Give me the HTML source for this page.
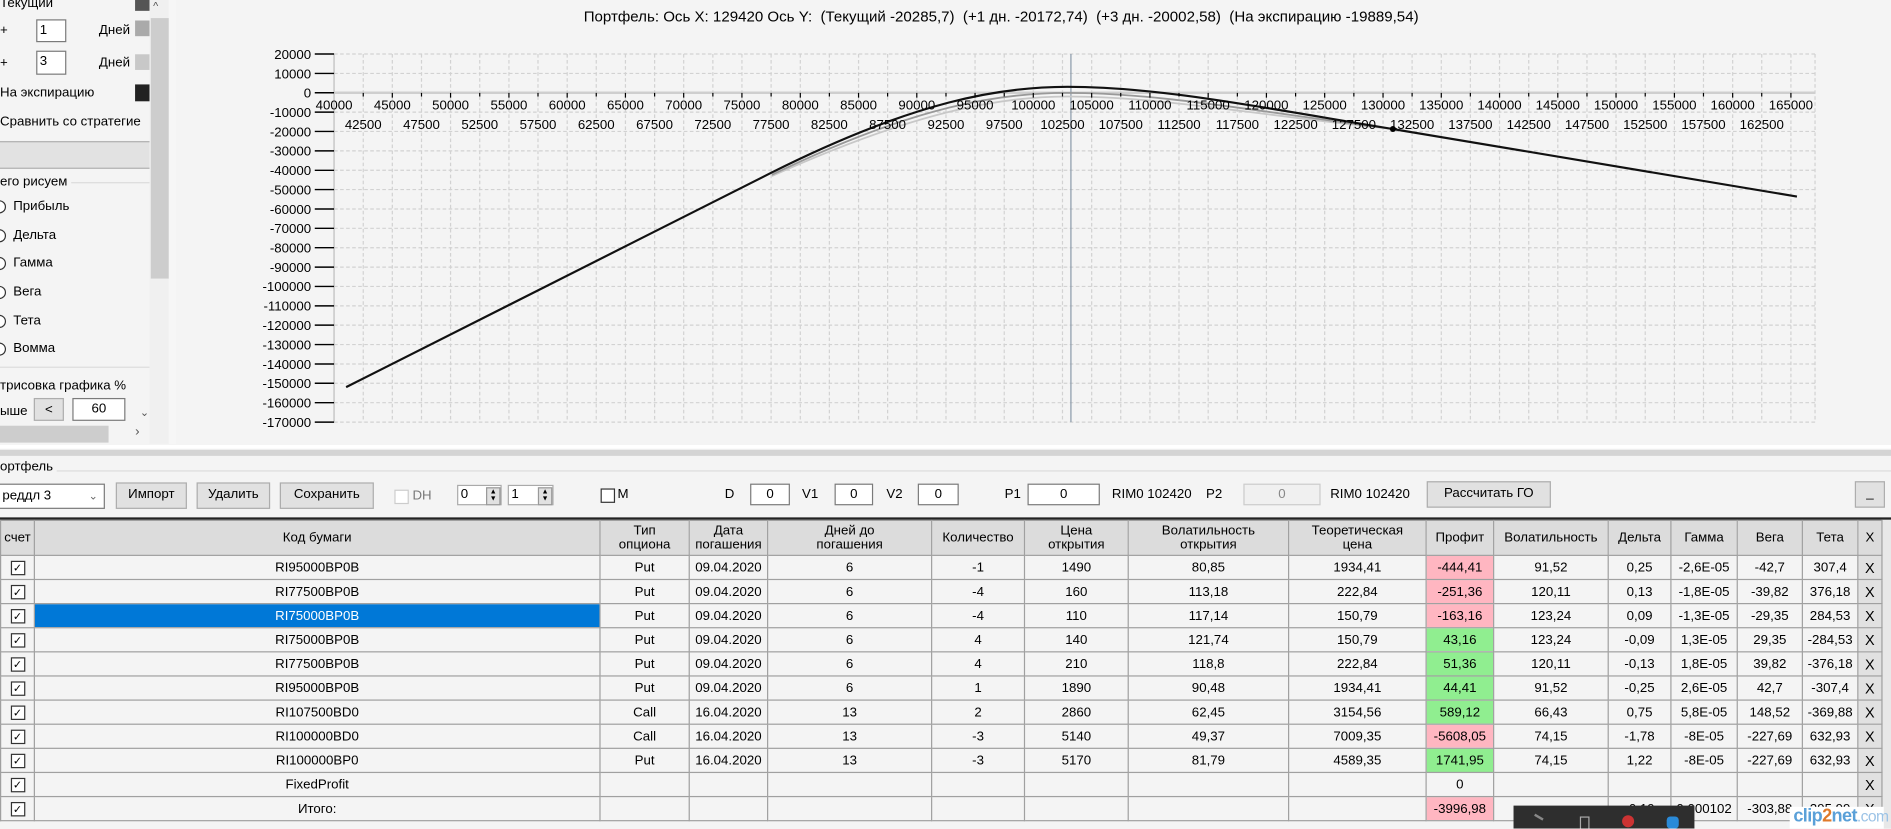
<!DOCTYPE html>
<html><head><meta charset="utf-8">
<style>
html,body{margin:0;padding:0;width:1891px;height:829px;overflow:hidden;background:#f4f4f4;}
#s{position:absolute;left:0;top:0;width:1568px;height:687px;transform:scale(1.206);transform-origin:0 0;font-family:"Liberation Sans",Arial,sans-serif;font-size:11px;color:#000;background:#f4f4f4;overflow:hidden;}
.a{position:absolute;white-space:nowrap;}
.box{position:absolute;background:#fff;border:1px solid #7a7a7a;box-sizing:border-box;}
.btn{position:absolute;background:#e1e1e1;border:1px solid #adadad;box-sizing:border-box;text-align:center;line-height:19px;}
.rad{position:absolute;width:11px;height:11px;border:1px solid #333;border-radius:50%;box-sizing:border-box;background:#fff;}
table{position:absolute;left:0;top:431px;border-collapse:collapse;table-layout:fixed;width:1560px;}
td,th{border:1px solid #a0a0a0;padding:0;text-align:center;font-weight:normal;overflow:hidden;white-space:nowrap;font-size:11px;}
th{background:#dcdcdc;height:28px;line-height:12px;}
td{height:19px;line-height:18px;background:#f4f4f4;}
.cb{display:inline-block;width:10px;height:10px;border:1px solid #333;background:#fff;font-size:9px;line-height:10px;vertical-align:middle;}
.r{background:#ffb6c1;} .g{background:#90ee90;}
td.x{background:#e1e1e1;border:1px solid #a0a0a0;font-size:12px;}
.sel{background:#0078d7;color:#fff;}
</style></head><body><div id="s">

<!-- left panel -->
<div class="a" style="left:0;top:-3px;">Текущий</div>
<div class="a" style="left:112px;top:0;width:12px;height:9px;background:#555;"></div>
<div class="a" style="left:0;top:19px;">+</div>
<div class="box" style="left:30px;top:16px;width:25px;height:19px;padding-left:2px;line-height:17px;">1</div>
<div class="a" style="left:82px;top:19px;">Дней</div>
<div class="a" style="left:112px;top:17px;width:12px;height:13px;background:#aaa;"></div>
<div class="a" style="left:0;top:46px;">+</div>
<div class="box" style="left:30px;top:42px;width:25px;height:20px;padding-left:2px;line-height:17px;">3</div>
<div class="a" style="left:82px;top:46px;">Дней</div>
<div class="a" style="left:112px;top:45px;width:12px;height:13px;background:#c8c8c8;"></div>
<div class="a" style="left:0;top:71px;">На экспирацию</div>
<div class="a" style="left:112px;top:70px;width:12px;height:14px;background:#222;"></div>
<div class="a" style="left:0;top:95px;">Сравнить со стратегие</div>
<div class="a" style="left:0;top:117px;width:124px;height:21px;background:#e2e2e2;border-top:1px solid #b0b0b0;border-bottom:1px solid #b0b0b0;"></div>
<div class="a" style="left:0;top:151px;width:124px;height:1px;background:#dcdcdc;"></div>
<div class="a" style="left:0;top:145px;background:#f4f4f4;padding-right:3px;">его рисуем</div>
<div class="rad" style="left:-6px;top:166px;"></div><div class="a" style="left:-4px;top:169px;width:4px;height:4px;background:#333;border-radius:50%;"></div>
<div class="a" style="left:11px;top:165px;">Прибыль</div>
<div class="rad" style="left:-6px;top:190px;"></div><div class="a" style="left:11px;top:189px;">Дельта</div>
<div class="rad" style="left:-6px;top:213px;"></div><div class="a" style="left:11px;top:212px;">Гамма</div>
<div class="rad" style="left:-6px;top:237px;"></div><div class="a" style="left:11px;top:236px;">Вега</div>
<div class="rad" style="left:-6px;top:261px;"></div><div class="a" style="left:11px;top:260px;">Тета</div>
<div class="rad" style="left:-6px;top:284px;"></div><div class="a" style="left:11px;top:283px;">Вомма</div>
<div class="a" style="left:0;top:304px;width:124px;height:1px;background:#dcdcdc;"></div>
<div class="a" style="left:0;top:314px;">трисовка графика %</div>
<div class="a" style="left:0;top:335px;">ыше</div>
<div class="btn" style="left:28px;top:330px;width:25px;height:19px;">&lt;</div>
<div class="box" style="left:60px;top:330px;width:44px;height:19px;text-align:center;line-height:17px;">60</div>
<div class="a" style="left:116px;top:337px;font-size:9px;color:#555;">&#8964;</div>
<div class="a" style="left:0;top:353px;width:90px;height:14px;background:#cdcdcd;"></div>
<div class="a" style="left:112px;top:352px;font-size:11px;color:#555;">›</div>
<div class="a" style="left:124px;top:0;width:16px;height:368px;background:#f0f0f0;"></div>
<div class="a" style="left:125px;top:15px;width:15px;height:216px;background:#cdcdcd;"></div>
<div class="a" style="left:127px;top:0;font-size:9px;color:#555;">^</div>
<div class="a" style="left:140px;top:0;width:6px;height:368px;background:#f6f6f6;"></div>

<!-- chart -->
<div class="a" style="left:484px;top:7px;font-size:12.5px;">Портфель: Ось X: 129420 Ось Y:&nbsp; (Текущий -20285,7)&nbsp; (+1 дн. -20172,74)&nbsp; (+3 дн. -20002,58)&nbsp; (На экспирацию -19889,54)</div>
<svg class="a" style="left:0;top:0" width="1568" height="370" viewBox="0 0 1568 370" font-family="Liberation Sans, Arial, sans-serif" font-size="11">
<g stroke="#d2d2d2" stroke-dasharray="3,2" stroke-width="1">
<path d="M277,44.8H1505M277,60.9H1505M277,93H1505M277,109H1505M277,125.1H1505M277,141.2H1505M277,157.2H1505M277,173.3H1505M277,189.3H1505M277,205.4H1505M277,221.5H1505M277,237.5H1505M277,253.6H1505M277,269.6H1505M277,285.7H1505M277,301.8H1505M277,317.8H1505M277,333.9H1505M277,350H1505"/>
<path d="M301.2,44.8V350M325.3,44.8V350M349.5,44.8V350M373.6,44.8V350M397.8,44.8V350M422,44.8V350M446.1,44.8V350M470.3,44.8V350M494.4,44.8V350M518.6,44.8V350M542.8,44.8V350M566.9,44.8V350M591.1,44.8V350M615.2,44.8V350M639.4,44.8V350M663.6,44.8V350M687.7,44.8V350M711.9,44.8V350M736,44.8V350M760.2,44.8V350M784.4,44.8V350M808.5,44.8V350M832.7,44.8V350M856.8,44.8V350M881,44.8V350M905.2,44.8V350M929.3,44.8V350M953.5,44.8V350M977.6,44.8V350M1001.8,44.8V350M1026,44.8V350M1050.1,44.8V350M1074.3,44.8V350M1098.4,44.8V350M1122.6,44.8V350M1146.8,44.8V350M1170.9,44.8V350M1195.1,44.8V350M1219.2,44.8V350M1243.4,44.8V350M1267.6,44.8V350M1291.7,44.8V350M1315.9,44.8V350M1340,44.8V350M1364.2,44.8V350M1388.4,44.8V350M1412.5,44.8V350M1436.7,44.8V350M1460.8,44.8V350M1485,44.8V350M1505,44.8V350"/>
</g>
<path d="M277,44.8V350" stroke="#cfcfcf" stroke-width="1.5"/>
<path d="M277,76.9H1505" stroke="#cfcfcf" stroke-width="2"/>
<g stroke="#000" stroke-width="1.2">
<path d="M261,44.8H277M261,60.9H277M261,76.9H277M261,93H277M261,109H277M261,125.1H277M261,141.2H277M261,157.2H277M261,173.3H277M261,189.3H277M261,205.4H277M261,221.5H277M261,237.5H277M261,253.6H277M261,269.6H277M261,285.7H277M261,301.8H277M261,317.8H277M261,333.9H277M261,350H277"/>
</g>
<g text-anchor="end">
<text x="258" y="48.8">20000</text><text x="258" y="64.9">10000</text><text x="258" y="80.9">0</text><text x="258" y="97">-10000</text><text x="258" y="113">-20000</text><text x="258" y="129.1">-30000</text><text x="258" y="145.2">-40000</text><text x="258" y="161.2">-50000</text><text x="258" y="177.3">-60000</text><text x="258" y="193.3">-70000</text><text x="258" y="209.4">-80000</text><text x="258" y="225.5">-90000</text><text x="258" y="241.5">-100000</text><text x="258" y="257.6">-110000</text><text x="258" y="273.6">-120000</text><text x="258" y="289.7">-130000</text><text x="258" y="305.8">-140000</text><text x="258" y="321.8">-150000</text><text x="258" y="337.9">-160000</text><text x="258" y="354">-170000</text>
</g>
<path d="M888,44.8V350" stroke="#8a9aaa" stroke-width="1"/>
<path d="M640,146 C760,92 830,80 885,80 C960,80 1040,95 1155,107" fill="none" stroke="#c8c8c8" stroke-width="1.5"/>
<path d="M640,145 C760,87 830,77 885,77 C960,77 1040,92 1155,107" fill="none" stroke="#999" stroke-width="1.5"/>
<path d="M287,321 L640,143 C760,83 830,72 885,72 C960,72 1040,88 1155,107 L1490,163" fill="none" stroke="#111" stroke-width="1.8"/>
<circle cx="1155" cy="107" r="2.5" fill="#000"/>
<g text-anchor="middle">
<text x="277" y="91">40000</text><text x="325.3" y="91">45000</text><text x="373.6" y="91">50000</text><text x="422" y="91">55000</text><text x="470.3" y="91">60000</text><text x="518.6" y="91">65000</text><text x="566.9" y="91">70000</text><text x="615.2" y="91">75000</text><text x="663.6" y="91">80000</text><text x="711.9" y="91">85000</text><text x="760.2" y="91">90000</text><text x="808.5" y="91">95000</text><text x="856.8" y="91">100000</text><text x="905.2" y="91">105000</text><text x="953.5" y="91">110000</text><text x="1001.8" y="91">115000</text><text x="1050.1" y="91">120000</text><text x="1098.4" y="91">125000</text><text x="1146.8" y="91">130000</text><text x="1195.1" y="91">135000</text><text x="1243.4" y="91">140000</text><text x="1291.7" y="91">145000</text><text x="1340" y="91">150000</text><text x="1388.4" y="91">155000</text><text x="1436.7" y="91">160000</text><text x="1485" y="91">165000</text>
<text x="301.2" y="107">42500</text><text x="349.5" y="107">47500</text><text x="397.8" y="107">52500</text><text x="446.1" y="107">57500</text><text x="494.4" y="107">62500</text><text x="542.8" y="107">67500</text><text x="591.1" y="107">72500</text><text x="639.4" y="107">77500</text><text x="687.7" y="107">82500</text><text x="736" y="107">87500</text><text x="784.4" y="107">92500</text><text x="832.7" y="107">97500</text><text x="881" y="107">102500</text><text x="929.3" y="107">107500</text><text x="977.6" y="107">112500</text><text x="1026" y="107">117500</text><text x="1074.3" y="107">122500</text><text x="1122.6" y="107">127500</text><text x="1170.9" y="107">132500</text><text x="1219.2" y="107">137500</text><text x="1267.6" y="107">142500</text><text x="1315.9" y="107">147500</text><text x="1364.2" y="107">152500</text><text x="1412.5" y="107">157500</text><text x="1460.8" y="107">162500</text>
</g>
<g stroke="#000" stroke-width="1"><path d="M301.2,77V80M325.3,77V81M349.5,77V80M373.6,77V81M397.8,77V80M422,77V81M446.1,77V80M470.3,77V81M494.4,77V80M518.6,77V81M542.8,77V80M566.9,77V81M591.1,77V80M615.2,77V81M639.4,77V80M663.6,77V81M687.7,77V80M711.9,77V81M736,77V80M760.2,77V81M784.4,77V80M808.5,77V81M832.7,77V80M856.8,77V81M881,77V80M905.2,77V81M929.3,77V80M953.5,77V81M977.6,77V80M1001.8,77V81M1026,77V80M1050.1,77V81M1074.3,77V80M1098.4,77V81M1122.6,77V80M1146.8,77V81M1170.9,77V80M1195.1,77V81M1219.2,77V80M1243.4,77V81M1267.6,77V80M1291.7,77V81M1315.9,77V80M1340,77V81M1364.2,77V80M1388.4,77V81M1412.5,77V80M1436.7,77V81M1460.8,77V80M1485,77V81"/></g>
</svg>

<!-- splitter -->
<div class="a" style="left:0;top:369px;width:1568px;height:3px;background:#fff;"></div>
<div class="a" style="left:0;top:373px;width:1568px;height:5px;background:#d4d4d4;"></div>
<div class="a" style="left:0;top:390px;width:1568px;height:1px;background:#dcdcdc;"></div>
<div class="a" style="left:0;top:381px;background:#f4f4f4;padding-right:3px;">ортфель</div>

<!-- toolbar -->
<div class="box" style="left:-2px;top:401px;width:89px;height:21px;padding-left:3px;line-height:18px;">реддл 3<span style="position:absolute;right:5px;top:0;color:#666;font-size:9px;">&#8964;</span></div>
<div class="btn" style="left:96px;top:400px;width:59px;height:22px;">Импорт</div>
<div class="btn" style="left:163px;top:400px;width:61px;height:22px;">Удалить</div>
<div class="btn" style="left:232px;top:400px;width:78px;height:22px;">Сохранить</div>
<div class="a" style="left:327px;top:406px;width:10px;height:10px;border:1px solid #ccc;background:#fff;"></div>
<div class="a" style="left:342px;top:405px;color:#777;">DH</div>
<div class="box" style="left:379px;top:402px;width:37px;height:17px;border-color:#aaa;padding-left:2px;line-height:14px;">0</div>
<div class="a" style="left:403px;top:404px;width:10px;height:13px;background:#e1e1e1;border:1px solid #999;font-size:6px;line-height:6px;text-align:center;">▲<br>▼</div>
<div class="box" style="left:421px;top:402px;width:38px;height:17px;border-color:#aaa;padding-left:2px;line-height:14px;">1</div>
<div class="a" style="left:446px;top:404px;width:10px;height:13px;background:#e1e1e1;border:1px solid #999;font-size:6px;line-height:6px;text-align:center;">▲<br>▼</div>
<div class="a" style="left:498px;top:405px;width:10px;height:10px;border:1px solid #333;background:#fff;"></div>
<div class="a" style="left:512px;top:404px;">M</div>
<div class="a" style="left:601px;top:404px;">D</div>
<div class="box" style="left:622px;top:401px;width:33px;height:18px;text-align:center;line-height:16px;">0</div>
<div class="a" style="left:665px;top:404px;">V1</div>
<div class="box" style="left:692px;top:401px;width:32px;height:18px;text-align:center;line-height:16px;">0</div>
<div class="a" style="left:735px;top:404px;">V2</div>
<div class="box" style="left:761px;top:401px;width:34px;height:18px;text-align:center;line-height:16px;">0</div>
<div class="a" style="left:833px;top:404px;">P1</div>
<div class="box" style="left:852px;top:401px;width:60px;height:18px;text-align:center;line-height:16px;">0</div>
<div class="a" style="left:922px;top:404px;">RIM0 102420</div>
<div class="a" style="left:1000px;top:404px;">P2</div>
<div class="box" style="left:1031px;top:401px;width:64px;height:18px;text-align:center;line-height:16px;border-color:#ccc;background:#f0f0f0;color:#888;">0</div>
<div class="a" style="left:1103px;top:404px;">RIM0 102420</div>
<div class="btn" style="left:1183px;top:399px;width:103px;height:22px;">Рассчитать ГО</div>
<div class="btn" style="left:1538px;top:399px;width:25px;height:22px;">_</div>

<div class="a" style="left:0;top:429px;width:1568px;height:2px;background:#222;"></div>
<div class="a" style="left:1560px;top:431px;width:8px;height:256px;background:#e8e8e8;"></div>

<table>
<colgroup><col style="width:28px"><col style="width:469px"><col style="width:74px"><col style="width:65px"><col style="width:136px"><col style="width:77px"><col style="width:86px"><col style="width:133px"><col style="width:114px"><col style="width:56px"><col style="width:95px"><col style="width:52px"><col style="width:55px"><col style="width:54px"><col style="width:46px"><col style="width:20px"></colgroup>
<tr><th>счет</th><th>Код бумаги</th><th>Тип<br>опциона</th><th>Дата<br>погашения</th><th>Дней до<br>погашения</th><th>Количество</th><th>Цена<br>открытия</th><th>Волатильность<br>открытия</th><th>Теоретическая<br>цена</th><th>Профит</th><th>Волатильность</th><th>Дельта</th><th>Гамма</th><th>Вега</th><th>Тета</th><th>X</th></tr>
<tr><td><span class="cb">✓</span></td><td>RI95000BP0B</td><td>Put</td><td>09.04.2020</td><td>6</td><td>-1</td><td>1490</td><td>80,85</td><td>1934,41</td><td class="r">-444,41</td><td>91,52</td><td>0,25</td><td>-2,6E-05</td><td>-42,7</td><td>307,4</td><td class="x">X</td></tr>
<tr><td><span class="cb">✓</span></td><td>RI77500BP0B</td><td>Put</td><td>09.04.2020</td><td>6</td><td>-4</td><td>160</td><td>113,18</td><td>222,84</td><td class="r">-251,36</td><td>120,11</td><td>0,13</td><td>-1,8E-05</td><td>-39,82</td><td>376,18</td><td class="x">X</td></tr>
<tr><td><span class="cb">✓</span></td><td class="sel">RI75000BP0B</td><td>Put</td><td>09.04.2020</td><td>6</td><td>-4</td><td>110</td><td>117,14</td><td>150,79</td><td class="r">-163,16</td><td>123,24</td><td>0,09</td><td>-1,3E-05</td><td>-29,35</td><td>284,53</td><td class="x">X</td></tr>
<tr><td><span class="cb">✓</span></td><td>RI75000BP0B</td><td>Put</td><td>09.04.2020</td><td>6</td><td>4</td><td>140</td><td>121,74</td><td>150,79</td><td class="g">43,16</td><td>123,24</td><td>-0,09</td><td>1,3E-05</td><td>29,35</td><td>-284,53</td><td class="x">X</td></tr>
<tr><td><span class="cb">✓</span></td><td>RI77500BP0B</td><td>Put</td><td>09.04.2020</td><td>6</td><td>4</td><td>210</td><td>118,8</td><td>222,84</td><td class="g">51,36</td><td>120,11</td><td>-0,13</td><td>1,8E-05</td><td>39,82</td><td>-376,18</td><td class="x">X</td></tr>
<tr><td><span class="cb">✓</span></td><td>RI95000BP0B</td><td>Put</td><td>09.04.2020</td><td>6</td><td>1</td><td>1890</td><td>90,48</td><td>1934,41</td><td class="g">44,41</td><td>91,52</td><td>-0,25</td><td>2,6E-05</td><td>42,7</td><td>-307,4</td><td class="x">X</td></tr>
<tr><td><span class="cb">✓</span></td><td>RI107500BD0</td><td>Call</td><td>16.04.2020</td><td>13</td><td>2</td><td>2860</td><td>62,45</td><td>3154,56</td><td class="g">589,12</td><td>66,43</td><td>0,75</td><td>5,8E-05</td><td>148,52</td><td>-369,88</td><td class="x">X</td></tr>
<tr><td><span class="cb">✓</span></td><td>RI100000BD0</td><td>Call</td><td>16.04.2020</td><td>13</td><td>-3</td><td>5140</td><td>49,37</td><td>7009,35</td><td class="r">-5608,05</td><td>74,15</td><td>-1,78</td><td>-8E-05</td><td>-227,69</td><td>632,93</td><td class="x">X</td></tr>
<tr><td><span class="cb">✓</span></td><td>RI100000BP0</td><td>Put</td><td>16.04.2020</td><td>13</td><td>-3</td><td>5170</td><td>81,79</td><td>4589,35</td><td class="g">1741,95</td><td>74,15</td><td>1,22</td><td>-8E-05</td><td>-227,69</td><td>632,93</td><td class="x">X</td></tr>
<tr><td><span class="cb">✓</span></td><td>FixedProfit</td><td></td><td></td><td></td><td></td><td></td><td></td><td></td><td>0</td><td></td><td></td><td></td><td></td><td></td><td class="x">X</td></tr>
<tr><td><span class="cb">✓</span></td><td>Итого:</td><td></td><td></td><td></td><td></td><td></td><td></td><td></td><td class="r">-3996,98</td><td></td><td>-0,19</td><td>0,000102</td><td>-303,88</td><td>295,99</td><td class="x">X</td></tr>
</table>

<!-- overlays -->
<div class="a" style="left:1255px;top:668px;width:150px;height:19px;background:#2e2e2e;"></div>
<div class="a" style="left:1270px;top:676px;width:8px;height:8px;border-top:2px solid #888;transform:rotate(30deg);"></div>
<div class="a" style="left:1310px;top:677px;width:6px;height:9px;border:1px solid #aaa;"></div>
<div class="a" style="left:1345px;top:676px;width:10px;height:10px;border-radius:50%;background:#c33;"></div>
<div class="a" style="left:1382px;top:677px;width:10px;height:10px;border-radius:3px;background:#2a8ad8;"></div>
<div class="a" style="left:1484px;top:669px;width:78px;height:18px;background:#fff;"></div>
<div class="a" style="left:1487px;top:668px;font-size:15px;font-weight:bold;color:#5aa0d8;letter-spacing:-0.5px;">clip<span style="color:#e07a2a">2</span>net<span style="font-weight:normal;color:#9cc3e6;font-size:13px;">.com</span></div>
</div></body></html>
